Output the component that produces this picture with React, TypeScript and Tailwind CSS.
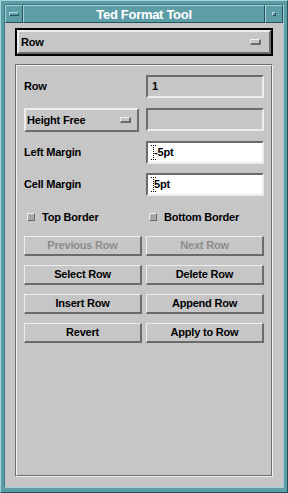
import React from "react";

const font = { fontFamily: '"Liberation Sans", Arial, sans-serif' };

function Raised({ className = "", children }: { className?: string; children?: React.ReactNode }) {
  return (
    <div
      className={
        "border-t-2 border-l-2 border-b-2 border-r-2 border-t-[#ededed] border-l-[#ededed] border-b-[#6b6b6b] border-r-[#6b6b6b] bg-[#c6c6c6] " +
        className
      }
    >
      {children}
    </div>
  );
}

function Indicator() {
  return (
    <div className="w-[11px] h-[6px] border-t border-l border-b-2 border-r-2 border-t-[#f0f0f0] border-l-[#f0f0f0] border-b-[#6b6b6b] border-r-[#6b6b6b] bg-[#c6c6c6]" />
  );
}

function Field({ value, white, cursor }: { value?: string; white?: boolean; cursor?: boolean }) {
  return (
    <div
      className={
        "relative h-[23px] border-2 border-t-[#6b6b6b] border-l-[#6b6b6b] border-b-[#ececec] border-r-[#ececec] flex items-center pl-[4px] text-[11px] font-bold text-black tracking-[-0.2px] " +
        (white ? "bg-white" : "bg-[#c6c6c6]")
      }
    >
      {cursor && (
        <svg className="absolute left-[3px] top-[2px]" width="5" height="15" viewBox="0 0 5 15">
          <path d="M0 0.5h5M0 14.5h5M2.5 0v15" stroke="#000" strokeWidth="1" strokeDasharray="1 1" fill="none" />
        </svg>
      )}
      <span className={cursor ? "ml-[2px]" : ""}>{value}</span>
    </div>
  );
}

function Btn({ label, disabled }: { label: string; disabled?: boolean }) {
  return (
    <div className="h-[20px] border-t border-l border-b-2 border-r-2 border-t-[#ededed] border-l-[#ededed] border-b-[#6b6b6b] border-r-[#6b6b6b] flex items-center justify-center text-[11px] font-bold tracking-[-0.2px]">
      <span className={disabled ? "text-[#8c8c8c]" : "text-black"}>{label}</span>
    </div>
  );
}

function Check({ label }: { label: string }) {
  return (
    <div className="flex items-center h-[16px]">
      <div className="ml-[3px] w-[8px] h-[8px] border-t border-l border-b border-r border-t-[#f0f0f0] border-l-[#f0f0f0] border-b-[#6b6b6b] border-r-[#6b6b6b] bg-[#a8a8a8]" />
      <span className="ml-[7px] text-[11px] font-bold tracking-[-0.2px] text-black">{label}</span>
    </div>
  );
}

export default function App() {
  return (
    <div
      style={font}
      className="w-[288px] h-[493px] bg-[#5d9da5] border border-t-[#a3d3d8] border-l-[#a3d3d8] border-b-[#23525a] border-r-[#23525a] pt-[3px] px-[3px] pb-[4px] flex flex-col"
    >
      <div className="flex-1 flex flex-col border border-t-[#3d7980] border-l-[#3d7980] border-b-[#9fcfd4] border-r-[#9fcfd4]">
        {/* title bar */}
        <div className="h-[18px] flex shrink-0">
          <div className="w-[18px] border border-t-[#a3d3d8] border-l-[#a3d3d8] border-b-[#23525a] border-r-[#23525a] flex items-center justify-center">
            <div className="w-[10px] h-[4px] border border-t-[#b8e0e4] border-l-[#b8e0e4] border-b-[#23525a] border-r-[#23525a]" />
          </div>
          <div className="flex-1 border border-t-[#a3d3d8] border-l-[#a3d3d8] border-b-[#23525a] border-r-[#23525a] flex items-center justify-center">
            <span className="text-white font-bold text-[13px] tracking-[-0.3px] leading-none">Ted Format Tool</span>
          </div>
          <div className="w-[18px] border border-t-[#a3d3d8] border-l-[#a3d3d8] border-b-[#23525a] border-r-[#23525a] flex items-center justify-center">
            <div className="w-[4px] h-[4px] border border-t-[#b8e0e4] border-l-[#b8e0e4] border-b-[#23525a] border-r-[#23525a]" />
          </div>
        </div>

        {/* content */}
        <div className="flex-1 bg-[#c6c6c6] flex flex-col px-[10px] pt-[5px] pb-[10px]">
          <div className="h-[28px] border-2 border-black">
            <Raised className="h-full flex items-center justify-between pl-[2px] pr-[8px]">
              <span className="text-[11px] font-bold tracking-[-0.2px] text-black">Row</span>
              <Indicator />
            </Raised>
          </div>

          <div className="mt-[8px] flex-1 border border-t-[#6e6e6e] border-l-[#6e6e6e] border-b-[#f0f0f0] border-r-[#f0f0f0]">
            <div className="h-full border border-t-[#f0f0f0] border-l-[#f0f0f0] border-b-[#6e6e6e] border-r-[#6e6e6e] px-[7px] pt-[9px]">
              <div className="grid grid-cols-[118px_118px] gap-x-[4px] h-[23px] items-center">
                <span className="text-[11px] font-bold tracking-[-0.2px]">Row</span>
                <Field value="1" />
              </div>
              <div className="mt-[10px] grid grid-cols-[118px_118px] gap-x-[4px] h-[24px] items-start">
                <div className="w-[115px] h-[24px] border-t-2 border-l-2 border-b-2 border-r-2 border-t-[#ededed] border-l-[#ededed] border-b-[#6b6b6b] border-r-[#6b6b6b] flex items-center justify-between pl-[1px] pr-[6px]">
                  <span className="text-[11px] font-bold tracking-[-0.2px]">Height Free</span>
                  <Indicator />
                </div>
                <Field />
              </div>
              <div className="mt-[9px] grid grid-cols-[118px_118px] gap-x-[4px] h-[23px] items-center">
                <span className="text-[11px] font-bold tracking-[-0.2px]">Left Margin</span>
                <Field value="-5pt" white cursor />
              </div>
              <div className="mt-[9px] grid grid-cols-[118px_118px] gap-x-[4px] h-[23px] items-center">
                <span className="text-[11px] font-bold tracking-[-0.2px]">Cell Margin</span>
                <Field value="5pt" white cursor />
              </div>
              <div className="mt-[13px] grid grid-cols-[118px_118px] gap-x-[4px]">
                <Check label="Top Border" />
                <Check label="Bottom Border" />
              </div>
              <div className="mt-[11px] grid grid-cols-[118px_118px] gap-x-[4px] gap-y-[9px]">
                <Btn label="Previous Row" disabled />
                <Btn label="Next Row" disabled />
                <Btn label="Select Row" />
                <Btn label="Delete Row" />
                <Btn label="Insert Row" />
                <Btn label="Append Row" />
                <Btn label="Revert" />
                <Btn label="Apply to Row" />
              </div>
            </div>
          </div>
        </div>
      </div>
    </div>
  );
}
